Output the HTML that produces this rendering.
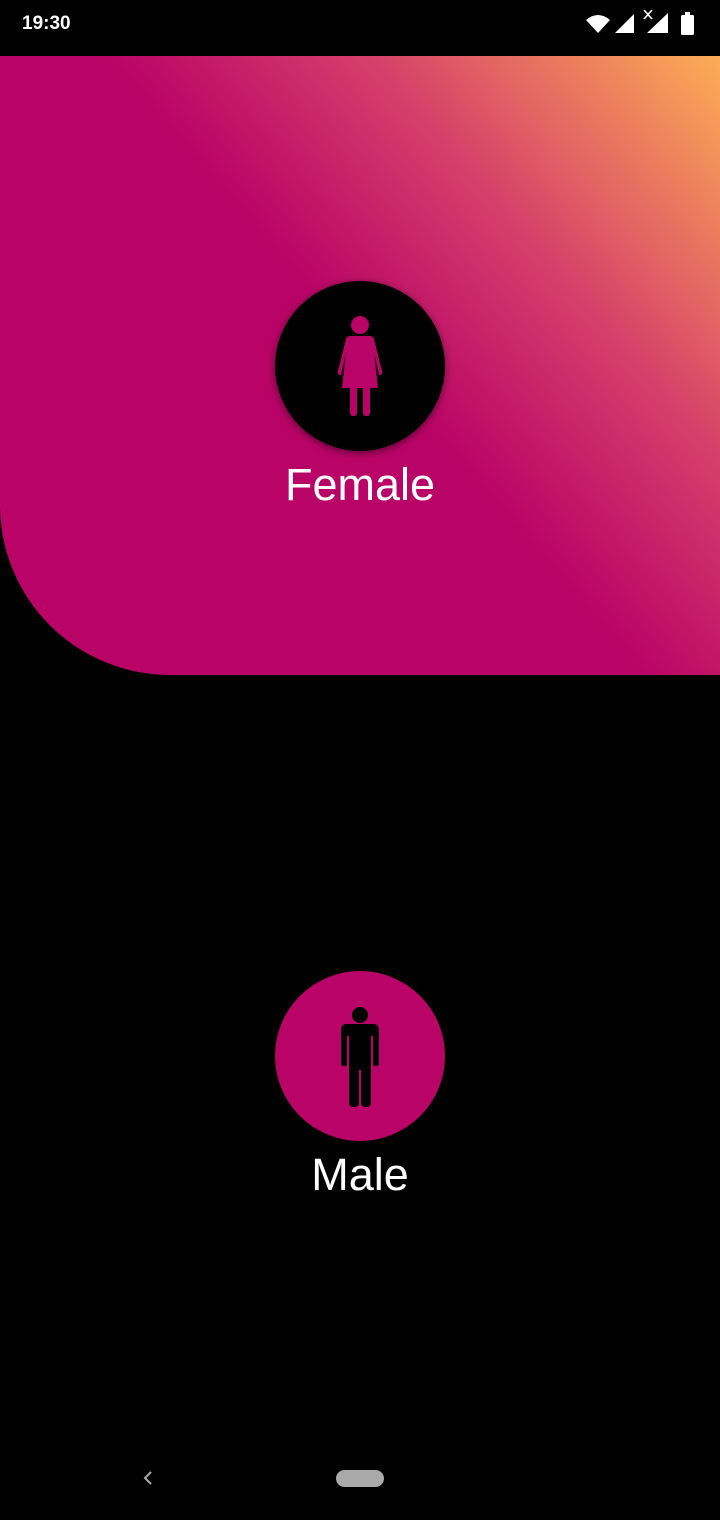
<!DOCTYPE html>
<html><head><meta charset="utf-8"><style>
body{margin:0;width:720px;height:1520px;background:#000;position:relative;overflow:hidden;font-family:"Liberation Sans",sans-serif}
.top{position:absolute;left:0;top:56px;width:720px;height:619px;border-bottom-left-radius:170px;background:linear-gradient(49deg,#b90366 51%,#d5406a 72%,#fdae55 100%)}
.lbl{position:absolute;width:720px;text-align:center;color:#fff;font-size:45px}
</style></head><body>
<div style="position:absolute;left:22px;top:13px;color:#fff;font-size:19px;font-weight:bold">19:30</div>
<svg style="position:absolute;left:0;top:0" width="720" height="56">
<path d="M586 20 Q598 10 610 20 L598 33 Z" fill="#fff"/>
<path d="M615 33 L634 14 L634 33 Z" fill="#fff"/>
<path d="M647 33 L668 13 L668 33 Z" fill="#fff"/>
<path d="M644 10 L652 19 M652 10 L644 19" stroke="#fff" stroke-width="1.6"/>
<rect x="681" y="15" width="13" height="20" rx="1.5" fill="#fff"/><rect x="685" y="12" width="5" height="4" fill="#fff"/>
</svg>
<div class="top"></div>
<svg style="position:absolute;left:0;top:0" width="720" height="1520">
<defs><filter id="s"><feDropShadow dx="0" dy="2" stdDeviation="4" flood-opacity="0.5"/></filter></defs>
<circle cx="360" cy="366" r="85" fill="#000" filter="url(#s)"/>
<g fill="#b90366">
<circle cx="360" cy="325" r="9"/>
<path d="M350 336 L370 336 Q373 336 374 339 L382 371 Q383 375 379 375 L374 352 L378 388 L342 388 L346 352 L341 375 Q337 375 338 371 L346 339 Q347 336 350 336Z"/>
<rect x="350" y="385" width="7" height="31" rx="3"/><rect x="363" y="385" width="7" height="31" rx="3"/>
</g>
<circle cx="360" cy="1056" r="85" fill="#b90366"/>
<g fill="#000">
<circle cx="360" cy="1015" r="8"/>
<path d="M347 1024 L373 1024 Q379 1024 379 1030 L379 1063 Q379 1066 376 1066 L373 1066 L373 1036 L370 1036 L370 1066 L350 1066 L350 1036 L347 1036 L347 1066 L344 1066 Q341 1066 341 1063 L341 1030 Q341 1024 347 1024Z"/>
<rect x="349" y="1030" width="22" height="40"/>
<rect x="349" y="1060" width="10" height="47" rx="4"/><rect x="361" y="1060" width="10" height="47" rx="4"/>
</g>
<path d="M151 1472 L145 1478 L151 1484" stroke="#aaa" stroke-width="2" fill="none"/>
<rect x="336" y="1470" width="48" height="17" rx="8.5" fill="#aaa"/>
</svg>
<div class="lbl" style="top:459px">Female</div>
<div class="lbl" style="top:1149px">Male</div>
</body></html>
